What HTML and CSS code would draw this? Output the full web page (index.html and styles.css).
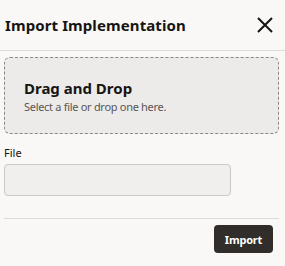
FILE: index.html
```html
<!doctype html>
<html>

<head>
    <link rel="stylesheet" href="styles.css">
</head>

<body>
    <div class="dialog">
        <div class="header">
            <h1 class="title">Import Implementation</h1>
            <button class="close" type="button" aria-label="Close">
                <svg width="16" height="16" viewBox="0 0 16 16">
                    <path d="M1 1L15 15M15 1L1 15" stroke="#161513" stroke-width="2" fill="none" />
                </svg>
            </button>
        </div>
        <div class="content">
            <div class="dropzone">
                <div class="drop-title">Drag and Drop</div>
                <div class="drop-hint">Select a file or drop one here.</div>
            </div>
            <label class="label" for="file">File</label>
            <input class="field" id="file" type="text" readonly>
        </div>
        <div class="footer">
            <button class="btn" type="button">Import</button>
        </div>
    </div>
</body>

</html>
```
FILE: styles.css
```css
body,
html {
    margin: 0;
    padding: 0;
    width: 100%;
    height: 100%;
    background-color: #f9f8f6;
    font-family: "Noto Sans", Arial, sans-serif;
    color: #161513;
}

.header {
    height: 50px;
    display: flex;
    align-items: center;
    justify-content: space-between;
    padding: 0 12px 0 5px;
    border-bottom: 1px solid #dedbd8;
}

.title {
    margin: 0;
    font-size: 15px;
    font-weight: 700;
    letter-spacing: 0.1px;
}

.close {
    border: none;
    background: none;
    padding: 0;
    width: 16px;
    height: 16px;
    cursor: pointer;
}

.close svg {
    display: block;
}

.content {
    padding: 6px 6px 0 4px;
}

.dropzone {
    height: 75px;
    border: 1px dashed #8c8782;
    border-radius: 6px;
    background-color: #ecebea;
    padding: 0 19px;
    display: flex;
    flex-direction: column;
    justify-content: center;
}

.drop-title {
    font-size: 15px;
    font-weight: 700;
    line-height: 22px;
}

.drop-hint {
    font-size: 11px;
    letter-spacing: -0.3px;
    color: #5b5652;
    line-height: 16px;
}

.label {
    display: block;
    margin-top: 11px;
    font-size: 11px;
    line-height: 16px;
}

.field {
    display: block;
    box-sizing: border-box;
    margin-top: 3px;
    width: 227px;
    height: 32px;
    border: 1px solid #cbc7c3;
    border-radius: 4px;
    background-color: #f1efed;
    outline: none;
}

.footer {
    margin: 22px 6px 0 4px;
    border-top: 1px solid #dedbd8;
    padding-top: 6px;
    display: flex;
    justify-content: flex-end;
}

.btn {
    width: 59px;
    height: 28px;
    margin-right: 6px;
    border: none;
    border-radius: 4px;
    background-color: #312d2a;
    color: #ffffff;
    font-family: "Noto Sans", Arial, sans-serif;
    font-size: 11px;
    font-weight: 700;
    letter-spacing: -0.2px;
    cursor: pointer;
}
```
